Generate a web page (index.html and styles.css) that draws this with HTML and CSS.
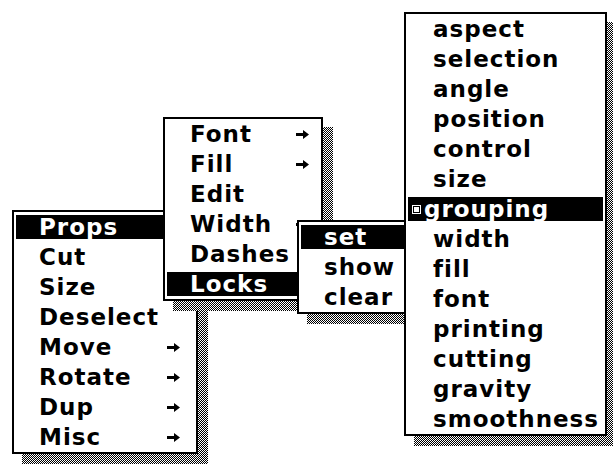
FILE: index.html
```html
<!DOCTYPE html>
<html>

<head>
    <meta name="viewport" content="width=device-width">
    <link rel="stylesheet" href="styles.css">
    <title>Popup menus</title>
</head>

<body>
    <div class="screen">
        <div class="menu menu-main">
            <ul class="menu-list">
                <li class="item sel">Props</li>
                <li class="item">Cut</li>
                <li class="item">Size</li>
                <li class="item">Deselect</li>
                <li class="item">Move <svg class="arrow" width="13" height="9" viewBox="0 0 13 9"><path d="M0 3h7V0l6 4.5L7 9V6H0z"/></svg></li>
                <li class="item">Rotate <svg class="arrow" width="13" height="9" viewBox="0 0 13 9"><path d="M0 3h7V0l6 4.5L7 9V6H0z"/></svg></li>
                <li class="item">Dup <svg class="arrow" width="13" height="9" viewBox="0 0 13 9"><path d="M0 3h7V0l6 4.5L7 9V6H0z"/></svg></li>
                <li class="item">Misc <svg class="arrow" width="13" height="9" viewBox="0 0 13 9"><path d="M0 3h7V0l6 4.5L7 9V6H0z"/></svg></li>
            </ul>
        </div>

        <div class="menu menu-props">
            <ul class="menu-list">
                <li class="item">Font <svg class="arrow" width="13" height="9" viewBox="0 0 13 9"><path d="M0 3h7V0l6 4.5L7 9V6H0z"/></svg></li>
                <li class="item">Fill <svg class="arrow" width="13" height="9" viewBox="0 0 13 9"><path d="M0 3h7V0l6 4.5L7 9V6H0z"/></svg></li>
                <li class="item">Edit</li>
                <li class="item">Width <svg class="arrow" width="13" height="9" viewBox="0 0 13 9"><path d="M0 3h7V0l6 4.5L7 9V6H0z"/></svg></li>
                <li class="item">Dashes</li>
                <li class="item sel">Locks</li>
            </ul>
        </div>

        <div class="menu menu-locks">
            <ul class="menu-list">
                <li class="item sel">set</li>
                <li class="item">show</li>
                <li class="item">clear</li>
            </ul>
        </div>

        <div class="menu menu-set">
            <ul class="menu-list">
                <li class="item">aspect</li>
                <li class="item">selection</li>
                <li class="item">angle</li>
                <li class="item">position</li>
                <li class="item">control</li>
                <li class="item">size</li>
                <li class="item sel checked"><svg class="check" width="9" height="9" viewBox="0 0 9 9"><rect x="0" y="0" width="9" height="9" fill="#fff"/><rect x="1.5" y="1.5" width="6" height="6" fill="none" stroke="#000"/></svg>grouping</li>
                <li class="item">width</li>
                <li class="item">fill</li>
                <li class="item">font</li>
                <li class="item">printing</li>
                <li class="item">cutting</li>
                <li class="item">gravity</li>
                <li class="item">smoothness</li>
            </ul>
        </div>
    </div>
</body>

</html>
```

FILE: styles.css
```css
body,
html {
    width: 100%;
    height: 100%;
}

body {
    margin: 0;
    background: #fff;
    font-family: "DejaVu Sans", Verdana, sans-serif;
    font-weight: bold;
    font-size: 23px;
    letter-spacing: 1px;
    color: #000;
}

.screen {
    position: relative;
    width: 613px;
    height: 465px;
    overflow: hidden;
}

.menu {
    position: absolute;
}

/* dithered drop shadow */
.menu::before {
    content: "";
    position: absolute;
    top: 10px;
    left: 10px;
    right: -10px;
    bottom: -10px;
    background: repeating-conic-gradient(#000 0 25%, #fff 0 50%) 0 0 / 2px 2px;
}

.menu-list {
    position: relative;
    display: flex;
    flex-direction: column;
    gap: 6px;
    list-style: none;
    margin: 0;
    padding: 3px 2px;
    background: #fff;
    border: 2px solid #000;
}

.item {
    display: flex;
    align-items: center;
    justify-content: space-between;
    height: 24px;
    padding: 0 14px 0 23px;
    white-space: nowrap;
}

.item.sel {
    background: #000;
    color: #fff;
}

.arrow {
    flex: none;
}

.menu-main {
    z-index: 1;
    left: 12px;
    top: 210px;
    width: 186px;
}

.menu-props {
    z-index: 2;
    left: 163px;
    top: 117px;
    width: 160px;
}

.menu-props .item {
    padding-right: 10px;
}

.menu-locks {
    z-index: 3;
    left: 297px;
    top: 220px;
    width: 130px;
}

.menu-set {
    z-index: 4;
    left: 404px;
    top: 12px;
    width: 203px;
}

.menu-set .item {
    justify-content: flex-start;
    padding-left: 25px;
}

.menu-set .item.checked {
    padding-left: 4px;
    gap: 3px;
}
```
